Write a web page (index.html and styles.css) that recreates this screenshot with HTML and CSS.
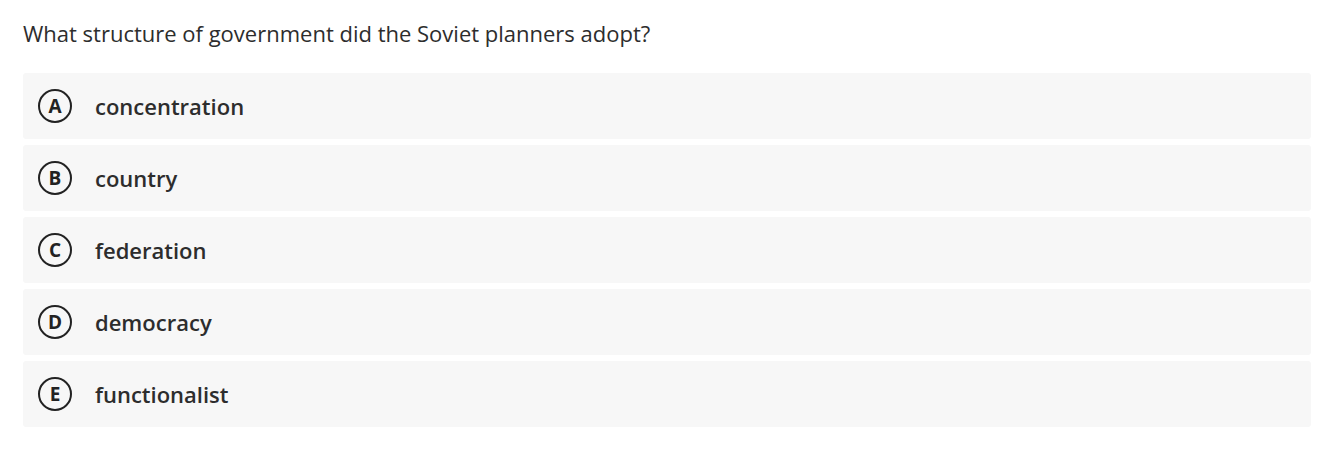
FILE: index.html
```html
<!DOCTYPE html>
<html>
<head>
<meta charset="utf-8">
<link rel="stylesheet" href="styles.css">
</head>
<body>
<div class="quiz">
  <p class="question">What structure of government did the Soviet planners adopt?</p>
  <ul class="options">
    <li class="option"><span class="letter">A</span><span class="label">concentration</span></li>
    <li class="option"><span class="letter">B</span><span class="label">country</span></li>
    <li class="option"><span class="letter">C</span><span class="label">federation</span></li>
    <li class="option"><span class="letter">D</span><span class="label">democracy</span></li>
    <li class="option"><span class="letter">E</span><span class="label">functionalist</span></li>
  </ul>
</div>
</body>
</html>
```
FILE: styles.css
```css
html, body {
  margin: 0;
  padding: 0;
  background: #ffffff;
}
.quiz {
  padding: 18px 24px 0 23px;
  font-family: "Open Sans", "Noto Sans", sans-serif;
  color: #2d2d2d;
}
.question {
  margin: 0;
  font-size: 22px;
  line-height: 30px;
  font-weight: 400;
}
.options {
  list-style: none;
  margin: 25px 0 0 0;
  padding: 0;
  display: flex;
  flex-direction: column;
  gap: 6px;
}
.option {
  height: 66px;
  background: #f7f7f7;
  border-radius: 3px;
  display: flex;
  align-items: center;
  padding-left: 15px;
  gap: 23px;
}
.letter {
  width: 34px;
  height: 34px;
  box-sizing: border-box;
  border: 2px solid #222;
  border-radius: 50%;
  display: flex;
  align-items: center;
  justify-content: center;
  font-size: 19px;
  font-weight: 700;
  color: #222;
  line-height: 1;
}
.label {
  font-size: 22px;
  font-weight: 600;
  color: #2d2d2d;
}
```
